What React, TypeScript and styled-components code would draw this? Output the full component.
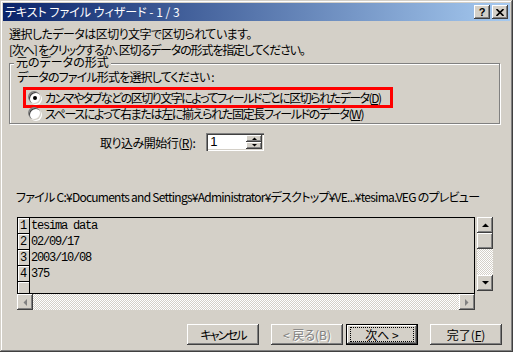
import React from "react";
import styled, { createGlobalStyle, css } from "styled-components";

const GlobalStyle = createGlobalStyle`
  html, body {
    margin: 0;
    padding: 0;
    background: #d4d0c8;
  }
  body {
    font-family: "Noto Sans CJK JP", "Liberation Sans", sans-serif;
    font-size: 12px;
    font-feature-settings: "palt" 1;
    color: #000;
  }
`;

const raised = css`
  background: #d4d0c8;
  box-shadow: inset -1px -1px #404040, inset 1px 1px #fff,
    inset -2px -2px #808080, inset 2px 2px #d4d0c8;
`;

const checker = css`
  background-color: #d4d0c8;
  background-image: repeating-conic-gradient(#fff 0% 25%, #d4d0c8 0% 50%);
  background-size: 2px 2px;
`;

// text run whose tracking is tuned to the narrow kana of the original UI font
const Caption = styled.span<{ $ls?: number }>`
  letter-spacing: ${(p) => p.$ls ?? 0}px;
  white-space: pre;
`;

const Window = styled.div`
  width: 513px;
  height: 352px;
  box-sizing: border-box;
  padding: 3px;
  display: flex;
  flex-direction: column;
  overflow: hidden;
  background: #d4d0c8;
  box-shadow: inset -1px -1px #404040, inset 1px 1px #d4d0c8,
    inset -2px -2px #808080, inset 2px 2px #fff;
`;

const TitleBar = styled.div`
  height: 18px;
  display: flex;
  align-items: center;
  justify-content: space-between;
  padding: 0 2px;
  background: linear-gradient(90deg, #0a246a, #a6caf0);
`;

const Title = styled.span`
  color: #fff;
  font-size: 12px;
  line-height: 18px;
  white-space: pre;
`;

const CaptionButtons = styled.div`
  display: flex;
  gap: 2px;
`;

const CaptionButton = styled.div`
  ${raised};
  width: 16px;
  height: 14px;
  display: flex;
  align-items: center;
  justify-content: center;
  font-family: "Liberation Sans", sans-serif;
  font-weight: 700;
  font-size: 11px;
  line-height: 14px;
`;

const Body = styled.div`
  flex: 1;
  display: flex;
  flex-direction: column;
  padding: 5px 0 0 6px;
`;

const Intro = styled.div`
  display: flex;
  flex-direction: column;
  line-height: 16px;
`;

const GroupBox = styled.div`
  position: relative;
  margin-top: 5px;
  width: 491px;
  height: 61px;
  box-sizing: border-box;
  padding: 5px 0 0 7px;
  border: 1px solid #808080;
  box-shadow: inset 1px 1px #fff, 1px 1px #fff;
`;

const Legend = styled.span`
  position: absolute;
  left: 4px;
  top: -8px;
  padding: 0 2px;
  line-height: 12px;
  background: #d4d0c8;
`;

const GroupText = styled.div`
  line-height: 16px;
`;

const RadioRow = styled.div<{ $first?: boolean; $highlight?: boolean }>`
  position: relative;
  display: flex;
  align-items: center;
  gap: 4px;
  height: 16px;
  padding-left: 11px;
  margin-top: ${(p) => (p.$first ? "4px" : "0")};
  ${(p) =>
    p.$highlight &&
    css`
      &::after {
        content: "";
        position: absolute;
        left: 6px;
        top: -2px;
        width: 370px;
        height: 21px;
        box-sizing: border-box;
        border: 3px solid #ff0000;
      }
    `}
`;

const Radio = styled.span<{ $checked?: boolean }>`
  position: relative;
  width: 12px;
  height: 12px;
  flex: none;
  box-sizing: border-box;
  border-radius: 50%;
  background: #fff;
  box-shadow: -1px -1px 0 0 #808080, 1px 1px 0 0 #fff,
    inset 1px 1px 0 0 #404040, inset -1px -1px 0 0 #d4d0c8;
  margin: 1px 0 0 1px;
  &::after {
    content: "";
    display: ${(p) => (p.$checked ? "block" : "none")};
    position: absolute;
    left: 4px;
    top: 4px;
    width: 4px;
    height: 4px;
    border-radius: 50%;
    background: #000;
  }
`;

const Key = styled.span`
  text-decoration: underline;
`;

const StartRow = styled.div`
  display: flex;
  align-items: center;
  gap: 11px;
  height: 18px;
  margin-top: 9px;
  padding-left: 91px;
`;

const SpinBox = styled.div`
  width: 58px;
  height: 18px;
  box-sizing: border-box;
  display: flex;
  align-items: stretch;
  background: #fff;
  box-shadow: inset 1px 1px #808080, inset 2px 2px #404040,
    inset -1px -1px #fff, inset -2px -2px #d4d0c8;
  padding: 2px;
`;

const SpinValue = styled.span`
  flex: 1;
  padding-left: 2px;
  line-height: 14px;
  font-family: "Liberation Sans", sans-serif;
  font-size: 13px;
`;

const SpinButtons = styled.div`
  width: 16px;
  display: flex;
  flex-direction: column;
`;

const SpinButton = styled.div`
  ${raised};
  flex: 1;
  display: flex;
  align-items: center;
  justify-content: center;
`;

const PreviewLabel = styled.div`
  margin: 38px 0 0 7px;
  line-height: 16px;
`;

const PreviewArea = styled.div`
  margin: 12px 0 0 8px;
  display: grid;
  grid-template-columns: 458px 16px;
  column-gap: 2px;
  width: 476px;
`;

const PreviewBox = styled.div`
  height: 77px;
  box-sizing: border-box;
  border: 1px solid #000;
  overflow: hidden;
  background: #d4d0c8;
`;

const DataRow = styled.div`
  display: flex;
  height: 16px;
`;

const RowHeader = styled.div`
  width: 12px;
  flex: none;
  box-sizing: border-box;
  border-right: 1px solid #000;
  border-bottom: 1px solid #000;
  box-shadow: inset 1px 1px #fff;
  display: flex;
  align-items: flex-end;
  justify-content: center;
  font-family: "Liberation Mono", monospace;
  font-size: 12px;
  line-height: 13px;
`;

const DataCell = styled.div`
  padding-left: 1px;
  font-family: "Liberation Mono", monospace;
  font-size: 12px;
  letter-spacing: -1.2px;
  line-height: 16px;
  white-space: pre;
`;

const VScroll = styled.div`
  ${checker};
  height: 74px;
  display: flex;
  flex-direction: column;
  justify-content: space-between;
`;

const ScrollButton = styled.div`
  ${raised};
  width: 16px;
  height: 16px;
  flex: none;
  display: flex;
  align-items: center;
  justify-content: center;
`;

const Thumb = styled.div`
  ${raised};
  width: 16px;
  height: 16px;
`;

const VTop = styled.div`
  display: flex;
  flex-direction: column;
`;

const HScroll = styled.div`
  ${checker};
  height: 16px;
  display: flex;
  justify-content: space-between;
`;

const ButtonBar = styled.div`
  display: flex;
  justify-content: flex-end;
  margin-top: 14px;
  padding-right: 8px;
`;

const DialogButton = styled.div<{ $default?: boolean; $disabled?: boolean; $gap?: number }>`
  ${raised};
  width: 72px;
  height: 21px;
  box-sizing: border-box;
  margin-left: ${(p) => p.$gap ?? 0}px;
  display: flex;
  align-items: center;
  justify-content: center;
  line-height: 16px;
  white-space: pre;
  color: ${(p) => (p.$disabled ? "#808080" : "#000")};
  text-shadow: ${(p) => (p.$disabled ? "1px 1px #fff" : "none")};
  ${(p) =>
    p.$default &&
    css`
      box-shadow: inset 0 0 0 1px #000, inset -2px -2px #404040,
        inset 2px 2px #fff, inset -3px -3px #808080;
    `}
`;

const FocusRect = styled.span`
  display: flex;
  align-items: center;
  justify-content: center;
  width: 62px;
  height: 13px;
  outline: 1px dotted #000;
`;

const Arrow = ({ dir, color = "#000" }: { dir: "up" | "down" | "left" | "right"; color?: string }) => {
  const pts = {
    up: "0,4 7,4 3.5,0.5",
    down: "0,0 7,0 3.5,3.5",
    left: "4,0 4,7 0.5,3.5",
    right: "0,0 0,7 3.5,3.5",
  }[dir];
  const vertical = dir === "up" || dir === "down";
  return (
    <svg width={vertical ? 7 : 4} height={vertical ? 4 : 7} viewBox={vertical ? "0 0 7 4" : "0 0 4 7"}>
      <polygon points={pts} fill={color} />
    </svg>
  );
};

const SmallArrow = ({ dir }: { dir: "up" | "down" }) => (
  <svg width="5" height="3" viewBox="0 0 5 3">
    <polygon points={dir === "up" ? "0,3 5,3 2.5,0.5" : "0,0 5,0 2.5,2.5"} fill="#000" />
  </svg>
);

const rows = ["tesima data", "02/09/17", "2003/10/08", "375", ""];

export default function App() {
  return (
    <>
      <GlobalStyle />
      <Window>
        <TitleBar>
          <Title>テキスト ファイル ウィザード - 1 / 3</Title>
          <CaptionButtons>
            <CaptionButton>?</CaptionButton>
            <CaptionButton>
              <svg width="8" height="7" viewBox="0 0 8 7">
                <path d="M0.5 0 L7.5 7 M7.5 0 L0.5 7" stroke="#000" strokeWidth="1.6" />
              </svg>
            </CaptionButton>
          </CaptionButtons>
        </TitleBar>

        <Body>
          <Intro>
            <Caption $ls={-0.55}>選択したデータは区切り文字で区切られています。</Caption>
            <Caption $ls={-1.15}>[次へ] をクリックするか、区切るデータの形式を指定してください。</Caption>
          </Intro>

          <GroupBox>
            <Legend>元のデータの形式</Legend>
            <GroupText>
              <Caption $ls={-0.85}>データのファイル形式を選択してください :</Caption>
            </GroupText>
            <RadioRow $first $highlight>
              <Radio $checked />
              <Caption $ls={-1.5}>
                カンマやタブなどの区切り文字によってフィールドごとに区切られたデータ(<Key>D</Key>)
              </Caption>
            </RadioRow>
            <RadioRow>
              <Radio />
              <Caption $ls={-1.35}>
                スペースによって右または左に揃えられた固定長フィールドのデータ(<Key>W</Key>)
              </Caption>
            </RadioRow>
          </GroupBox>

          <StartRow>
            <Caption $ls={-0.5}>
              取り込み開始行(<Key>R</Key>):
            </Caption>
            <SpinBox>
              <SpinValue>1</SpinValue>
              <SpinButtons>
                <SpinButton>
                  <SmallArrow dir="up" />
                </SpinButton>
                <SpinButton>
                  <SmallArrow dir="down" />
                </SpinButton>
              </SpinButtons>
            </SpinBox>
          </StartRow>

          <PreviewLabel>
            <Caption $ls={-0.75}>
              ファイル C:¥Documents and Settings¥Administrator¥デスクトップ¥VE...¥tesima.VEG のプレビュー
            </Caption>
          </PreviewLabel>

          <PreviewArea>
            <PreviewBox>
              {rows.map((r, i) => (
                <DataRow key={i}>
                  <RowHeader>{r ? i + 1 : ""}</RowHeader>
                  <DataCell>{r}</DataCell>
                </DataRow>
              ))}
            </PreviewBox>
            <VScroll>
              <VTop>
                <ScrollButton>
                  <Arrow dir="up" />
                </ScrollButton>
                <Thumb />
              </VTop>
              <ScrollButton>
                <Arrow dir="down" />
              </ScrollButton>
            </VScroll>
            <HScroll>
              <ScrollButton>
                <Arrow dir="left" color="#808080" />
              </ScrollButton>
              <ScrollButton>
                <Arrow dir="right" color="#808080" />
              </ScrollButton>
            </HScroll>
          </PreviewArea>

          <ButtonBar>
            <DialogButton>
              <Caption $ls={-1.8}>キャンセル</Caption>
            </DialogButton>
            <DialogButton $disabled $gap={12}>
              {"< 戻る(B)"}
            </DialogButton>
            <DialogButton $default $gap={3}>
              <FocusRect>{"次へ >"}</FocusRect>
            </DialogButton>
            <DialogButton $gap={12}>
              完了(<Key>F</Key>)
            </DialogButton>
          </ButtonBar>
        </Body>
      </Window>
    </>
  );
}
